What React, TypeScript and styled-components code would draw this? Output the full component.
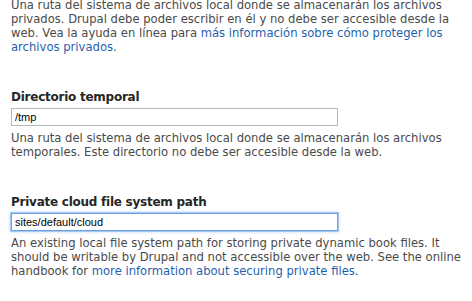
import React from 'react';
import styled, {createGlobalStyle, css} from 'styled-components';

const GlobalStyle = createGlobalStyle`
  html, body {
    margin: 0;
    padding: 0;
    background: #fff;
  }
  body {
    font-family: "DejaVu Sans", "Noto Sans", sans-serif;
    overflow: hidden;
  }
`

const Page = styled.div`
  width: 472px;
  height: 301px;
  padding: 0 11px;
  box-sizing: border-box;
  overflow: hidden;
`

const Form = styled.div`
  margin-top: -2px;
  display: flex;
  flex-direction: column;
  gap: 35px;
`

const FormItem = styled.div`
  display: flex;
  flex-direction: column;
`

const Label = styled.label`
  font-weight: bold;
  font-size: 12px;
  line-height: 16px;
  letter-spacing: -0.25px;
  color: #262626;
`

const TextInput = styled.input<{ $focused?: boolean }>`
  box-sizing: border-box;
  width: 327px;
  height: 18px;
  margin: 3px 0 0;
  padding: 0 3px;
  font-family: "Liberation Sans", Arial, sans-serif;
  font-size: 11px;
  color: #000;
  border: 1px solid #b8b8b8;
  border-radius: 0;
  outline: none;
  background: #fff;

  ${({$focused}) => $focused && css`
    border-color: #6a9fe0;
    box-shadow: 0 0 0 1px #a9c8f0, 0 0 3px 1px #c3d9f5;
  `}
`

const Description = styled.div<{ $gap?: number }>`
  margin-top: ${({$gap}) => $gap ?? 5}px;
  font-size: 11.6px;
  line-height: 14px;
  color: #4a4a4a;
  width: 450px;
`

const Link = styled.a`
  color: #1f5fae;
  text-decoration: none;
`

export default function App() {
  return (
    <Page>
      <GlobalStyle/>
      <Form>
        <FormItem>
          <Description $gap={0}>
            Una ruta del sistema de archivos local donde se almacenarán los archivos privados. Drupal debe poder escribir en él y no debe ser accesible desde la web. Vea la ayuda en línea para <Link href="#">más información sobre cómo proteger los archivos privados</Link>.
          </Description>
        </FormItem>

        <FormItem>
          <Label>Directorio temporal</Label>
          <TextInput defaultValue="/tmp" readOnly/>
          <Description>
            Una ruta del sistema de archivos local donde se almacenarán los archivos temporales. Este directorio no debe ser accesible desde la web.
          </Description>
        </FormItem>

        <FormItem>
          <Label>Private cloud file system path</Label>
          <TextInput $focused defaultValue="sites/default/cloud" readOnly/>
          <Description>
            An existing local file system path for storing private dynamic book files. It should be writable by Drupal and not accessible over the web. See the online handbook for <Link href="#">more information about securing private files</Link>.
          </Description>
        </FormItem>
      </Form>
    </Page>
  );
}
